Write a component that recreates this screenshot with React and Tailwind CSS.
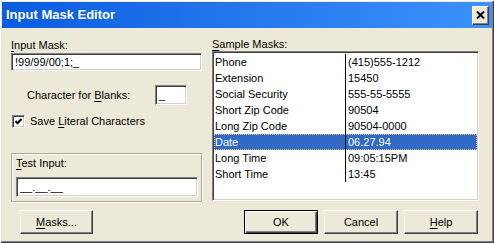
import { useState } from 'react'

const font = { fontFamily: '"Liberation Sans", Arial, sans-serif' }

const masks = [
  ['Phone', '(415)555-1212'],
  ['Extension', '15450'],
  ['Social Security', '555-55-5555'],
  ['Short Zip Code', '90504'],
  ['Long Zip Code', '90504-0000'],
  ['Date', '06.27.94'],
  ['Long Time', '09:05:15PM'],
  ['Short Time', '13:45'],
]

const sunken =
  'bg-white border border-t-[#808080] border-l-[#808080] border-b-white border-r-white shadow-[inset_1px_1px_0_#404040,inset_-1px_-1px_0_#d4d0c8]'

const raised =
  'bg-[#ECE9D8] border border-t-white border-l-white border-b-[#404040] border-r-[#404040] shadow-[inset_-1px_-1px_0_#808080]'

const Button = ({ children, isDefault, className = '' }) => (
  <div
    className={`${
      isDefault
        ? 'bg-[#ECE9D8] border border-black shadow-[inset_1px_1px_0_#fff,inset_-1px_-1px_0_#404040,inset_-2px_-2px_0_#808080]'
        : raised
    } h-[24px] flex items-center justify-center text-[11px] text-black ${className}`}
  >
    {children}
  </div>
)

export default function App() {
  const [selected, setSelected] = useState(5)

  return (
    <div
      style={font}
      className="w-[494px] h-[243px] bg-[#ECE9D8] p-[2px] shadow-[inset_1px_1px_0_#fff,inset_-1px_-1px_0_#404040,inset_-2px_-2px_0_#808080] text-[11px] text-black overflow-hidden select-none"
    >
      {/* title bar */}
      <div className="h-[26px] bg-gradient-to-r from-[#0A5CE0] to-[#3C92FA] flex items-center pl-[4px] pr-[3px]">
        <span className="text-white font-bold text-[13px]">Input Mask Editor</span>
        <div className="ml-auto w-[17px] h-[19px] bg-[#ECE9D8] border border-t-white border-l-white border-b-[#404040] border-r-[#404040] shadow-[inset_-1px_-1px_0_#808080] flex items-center justify-center">
          <svg width="9" height="8" viewBox="0 0 9 8">
            <path d="M1 0.5 L8 7.5 M8 0.5 L1 7.5" stroke="#000" strokeWidth="2" />
          </svg>
        </div>
      </div>

      <div className="flex pl-[9px]">
        {/* left column */}
        <div className="w-[191px] flex flex-col">
          <div className="mt-[10px] h-[14px] leading-[14px]">
            <span className="underline underline-offset-2">I</span>nput Mask:
          </div>
          <div className={`${sunken} mt-[1px] h-[18px] flex items-center pl-[3px] leading-none`}>
            !99/99/00;1;_
          </div>

          <div className="mt-[14px] h-[20px] flex items-center">
            <span className="pl-[16px] w-[144px]">
              Character for <span className="underline underline-offset-2">B</span>lanks:
            </span>
            <div className={`${sunken} w-[32px] h-[20px] flex items-center pl-[3px]`}>_</div>
          </div>

          <div className="mt-[10px] h-[13px] flex items-center">
            <div className={`${sunken} ml-[1px] w-[13px] h-[13px] flex items-center justify-center`}>
              <svg width="7" height="7" viewBox="0 0 7 7">
                <path d="M0.5 3 L2.5 5.2 L6.5 1" stroke="#000" strokeWidth="2" fill="none" />
              </svg>
            </div>
            <span className="ml-[5px]">
              Save <span className="underline underline-offset-2">L</span>iteral Characters
            </span>
          </div>

          <div className="mt-[25px] h-[49px] border border-[#ACA899] shadow-[inset_1px_1px_0_#fff,1px_1px_0_#fff] flex flex-col px-[4px]">
            <div className="mt-[2px] h-[14px] leading-[14px]">
              <span className="underline underline-offset-2">T</span>est Input:
            </div>
            <div className={`${sunken} mt-[7px] h-[20px] flex items-center pl-[3px] mr-[-1px]`}>
              __.__.__
            </div>
          </div>

          <Button className="mt-[8px] ml-[9px] w-[73px]">
            <span className="underline underline-offset-2">M</span>asks...
          </Button>
        </div>

        {/* right column */}
        <div className="ml-[10px] w-[267px] flex flex-col">
          <div className="mt-[9px] h-[14px] leading-[14px]">
            <span className="underline underline-offset-2">S</span>ample Masks:
          </div>
          <div className={`${sunken} h-[150px] pt-[2px] px-[1px]`}>
            {masks.map(([name, value], i) => (
              <div
                key={name}
                onClick={() => setSelected(i)}
                className={`h-[16px] flex items-center ${
                  i === selected
                    ? 'bg-[#316AC5] text-white outline outline-1 outline-dotted outline-[#E8C878] -outline-offset-1'
                    : ''
                }`}
              >
                <span className="w-[131px] pl-[1px]">{name}</span>
                <span className="h-full border-l border-black pl-[2px] flex items-center">{value}</span>
              </div>
            ))}
          </div>

          <div className="mt-[9px] ml-[32px] flex gap-[6px]">
            <Button isDefault className="w-[74px]">OK</Button>
            <Button className="w-[74px]">Cancel</Button>
            <Button className="w-[74px]">
              <span className="underline underline-offset-2">H</span>elp
            </Button>
          </div>
        </div>
      </div>
    </div>
  )
}
